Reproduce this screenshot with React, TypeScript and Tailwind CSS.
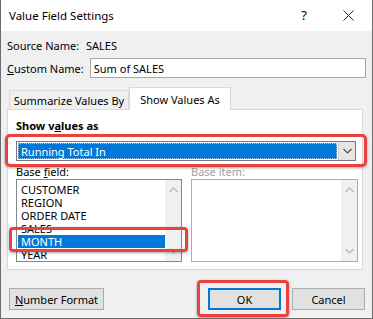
import React from "react";

const font = { fontFamily: '"Noto Sans", "Liberation Sans", sans-serif' };

function Chevron({ up, className }: { up?: boolean; className?: string }) {
  return (
    <svg width="9" height="6" viewBox="0 0 9 6" className={className}>
      <path
        d={up ? "M0.5 5 L4.5 1 L8.5 5" : "M0.5 1 L4.5 5 L8.5 1"}
        fill="none"
        stroke="currentColor"
        strokeWidth="1.2"
      />
    </svg>
  );
}

function ScrollBar() {
  return (
    <div className="w-[16px] h-full bg-[#f0f0f0] flex flex-col items-center justify-between py-[7px] text-[#b5b5b5]">
      <Chevron up />
      <Chevron />
    </div>
  );
}

const fields = ["CUSTOMER", "REGION", "ORDER DATE", "SALES", "MONTH", "YEAR"];

export default function App() {
  return (
    <div
      className="relative w-[373px] h-[319px] bg-[#f0f0f0] text-[11px] text-black border-l border-r border-b border-[#6b6b6b] overflow-hidden leading-none whitespace-nowrap"
      style={font}
    >
      {/* title bar */}
      <div className="h-[31px] bg-white flex items-center pl-[8px]">
        <span className="text-[11.5px]">Value Field Settings</span>
        <span className="ml-auto mr-[36px] text-[13px]">?</span>
        <svg width="11" height="11" viewBox="0 0 11 11" className="mr-[18px]">
          <path d="M0.5 0.5 L10.5 10.5 M10.5 0.5 L0.5 10.5" stroke="#222" strokeWidth="1" />
        </svg>
      </div>

      <div className="px-[6px]">
        {/* source name */}
        <div className="mt-[6px] h-[16px] flex items-center">
          <span className="w-[79px]">Source Name:</span>
          <span>SALES</span>
        </div>

        {/* custom name */}
        <div className="mt-[5px] h-[20px] flex items-center">
          <span className="w-[83px]">
            <span className="underline">C</span>ustom Name:
          </span>
          <div className="w-[277px] h-[20px] bg-white border border-[#a6a6a6] flex items-center px-[3px]">
            Sum of SALES
          </div>
        </div>

        {/* tabs */}
        <div className="mt-[9px] h-[22px] flex items-end pl-[2px] relative z-10">
          <div className="w-[120px] h-[19px] border border-b-0 border-[#d9d9d9] flex items-center justify-center">
            Summarize Values By
          </div>
          <div className="w-[102px] h-[23px] -mb-[1px] bg-white border border-b-0 border-[#d9d9d9] flex items-center justify-center">
            Show Values As
          </div>
        </div>

        {/* tab panel */}
        <div className="w-[356px] h-[161px] bg-white border border-[#d9d9d9] pl-[8px] pt-[9px]">
          <div className="h-[12px] flex items-center font-bold">
            Show v<span className="underline">a</span>lues as
          </div>
          <div className="mt-[10px] w-[340px] h-[20px] border border-[#7a7a7a] flex">
            <div className="flex-1 p-[1px]">
              <div className="h-full bg-[#0078d7] text-white border border-dotted border-[#9cc9f0] flex items-center pl-[2px]">
                Running Total In
              </div>
            </div>
            <div className="w-[17px] h-full bg-[#e5e5e5] border-l border-[#cfcfcf] flex items-center justify-center text-[#555]">
              <Chevron />
            </div>
          </div>

          <div className="mt-[4px] flex gap-[9px]">
            <div className="flex flex-col">
              <div className="h-[13px] flex items-center">
                Base&nbsp;<span className="underline">f</span>ield:
              </div>
              <div className="mt-[1px] w-[166px] h-[83px] border border-[#828790] flex overflow-hidden">
                <div className="flex-1 pt-[3px] pl-[1px]">
                  {fields.map((f) => (
                    <div
                      key={f}
                      className={
                        "h-[13px] flex items-center pl-[3px] " +
                        (f === "MONTH" ? "bg-[#0078d7] text-white" : "")
                      }
                    >
                      {f}
                    </div>
                  ))}
                </div>
                <ScrollBar />
              </div>
            </div>
            <div className="flex flex-col">
              <div className="h-[13px] flex items-center text-[#a0a0a0]">Base item:</div>
              <div className="mt-[1px] w-[167px] h-[83px] border border-[#adadad] flex justify-end">
                <ScrollBar />
              </div>
            </div>
          </div>
        </div>

        {/* buttons */}
        <div className="mt-[18px] flex items-center">
          <button className="ml-[2px] w-[95px] h-[22px] bg-[#e1e1e1] border border-[#adadad] flex items-center justify-center">
            <span className="underline">N</span>umber Format
          </button>
          <button className="ml-[104px] w-[73px] h-[22px] bg-[#e1e1e1] border-2 border-[#0078d7] flex items-center justify-center">
            OK
          </button>
          <button className="ml-[11px] w-[73px] h-[22px] bg-[#e1e1e1] border border-[#adadad] flex items-center justify-center">
            Cancel
          </button>
        </div>
      </div>

      {/* red highlight boxes */}
      <div className="absolute left-[4px] top-[134px] w-[362px] h-[33px] border-[3px] border-[#e8413e] rounded-[5px] shadow-[0_1px_3px_rgba(0,0,0,0.35)]" />
      <div className="absolute left-[8px] top-[227px] w-[179px] h-[25px] border-[3px] border-[#e8413e] rounded-[4px] shadow-[0_1px_3px_rgba(0,0,0,0.35)]" />
      <div className="absolute left-[196px] top-[280px] w-[92px] h-[37px] border-[3px] border-[#e8413e] rounded-[4px] shadow-[0_1px_3px_rgba(0,0,0,0.35)]" />
    </div>
  );
}
